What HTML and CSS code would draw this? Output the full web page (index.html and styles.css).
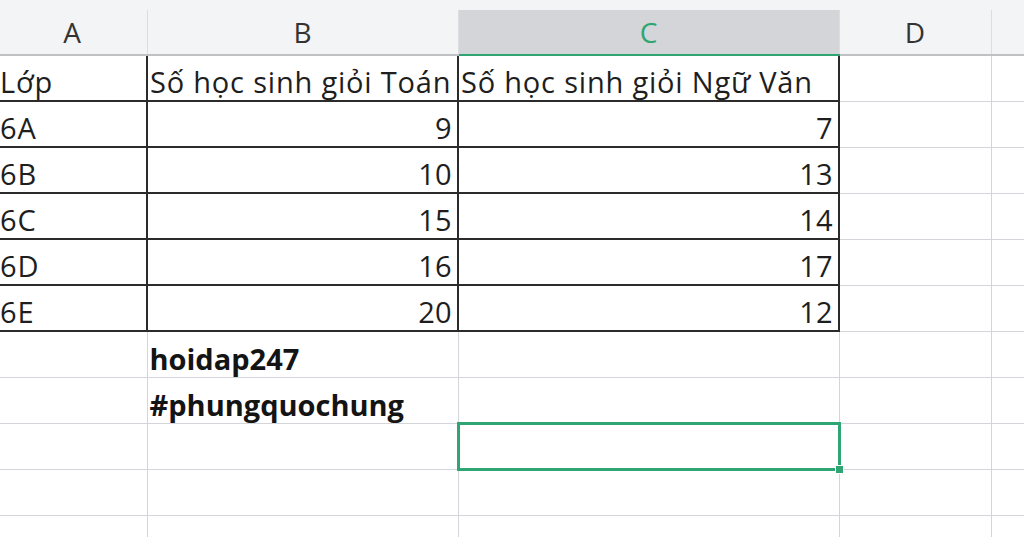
FILE: index.html
```html
<!DOCTYPE html>
<html>
<head>
<meta charset="utf-8">
<link rel="stylesheet" href="styles.css">
</head>
<body>
<div class="sheet">
  <table class="grid">
    <colgroup>
      <col class="col-a"><col class="col-b"><col class="col-c"><col class="col-d"><col class="col-e">
    </colgroup>
    <thead>
      <tr class="hdr">
        <th>A</th><th>B</th><th class="sel">C</th><th>D</th><th></th>
      </tr>
    </thead>
    <tbody>
      <tr><td class="t">Lớp</td><td class="t">Số học sinh giỏi Toán</td><td class="t">Số học sinh giỏi Ngữ Văn</td><td></td><td></td></tr>
      <tr><td class="t">6A</td><td class="t n">9</td><td class="t n">7</td><td></td><td></td></tr>
      <tr><td class="t">6B</td><td class="t n">10</td><td class="t n">13</td><td></td><td></td></tr>
      <tr><td class="t">6C</td><td class="t n">15</td><td class="t n">14</td><td></td><td></td></tr>
      <tr><td class="t">6D</td><td class="t n">16</td><td class="t n">17</td><td></td><td></td></tr>
      <tr><td class="t">6E</td><td class="t n">20</td><td class="t n">12</td><td></td><td></td></tr>
      <tr><td></td><td class="b">hoidap247</td><td></td><td></td><td></td></tr>
      <tr><td></td><td class="b">#phungquochung</td><td></td><td></td><td></td></tr>
      <tr><td></td><td></td><td class="active"><span class="handle"></span></td><td></td><td></td></tr>
      <tr><td></td><td></td><td></td><td></td><td></td></tr>
      <tr><td></td><td></td><td></td><td></td><td></td></tr>
    </tbody>
  </table>
</div>
</body>
</html>
```
FILE: styles.css
```css
html, body {
  margin: 0;
  padding: 0;
  background: #ffffff;
  overflow: hidden;
  width: 1024px;
  height: 537px;
}
.sheet {
  background: #f3f4f6;
  padding-top: 10px;
  margin-left: -4px;
  font-family: "Open Sans", Lato, "Liberation Sans", sans-serif;
}
.grid {
  border-collapse: collapse;
  table-layout: fixed;
  width: 1068px;
  background: #ffffff;
}
.col-a { width: 150px; }
.col-b { width: 311px; }
.col-c { width: 381px; }
.col-d { width: 152px; }
.col-e { width: 74px; }
.grid tr { height: 46px; }
.grid tr.hdr { height: 45px; }
.grid th {
  padding: 0;
  background: #f3f4f6;
  font-weight: normal;
  font-size: 28px;
  line-height: 30px;
  color: #333333;
  text-align: center;
  vertical-align: middle;
  border-top: none;
  border-left: 1px solid #dcdde1;
  border-right: 1px solid #dcdde1;
  border-bottom: 2px solid #bfc1c5;
}
.grid th.sel {
  background: #d3d5d8;
  color: #2ea572;
  border-bottom: 2px solid #2ea572;
}
.grid td {
  padding: 0 5px 0 2px;
  border: 1px solid #d3d5da;
  font-size: 29px;
  line-height: 36px;
  letter-spacing: 0.8px;
  color: #1e1e1e;
  white-space: nowrap;
  overflow: visible;
  vertical-align: bottom;
  position: relative;
}
.grid td.t {
  border: 2px solid #2b2b2b;
}
.grid td.n {
  text-align: right;
  letter-spacing: 0.3px;
}
.grid td.b {
  font-weight: bold;
  letter-spacing: 0;
  color: #141414;
}
.grid td.active {
  border: 3px solid #2ea572;
}
.handle {
  position: absolute;
  right: -6px;
  bottom: -6px;
  width: 7px;
  height: 7px;
  background: #2ea572;
  border: 1px solid #ffffff;
}
```
